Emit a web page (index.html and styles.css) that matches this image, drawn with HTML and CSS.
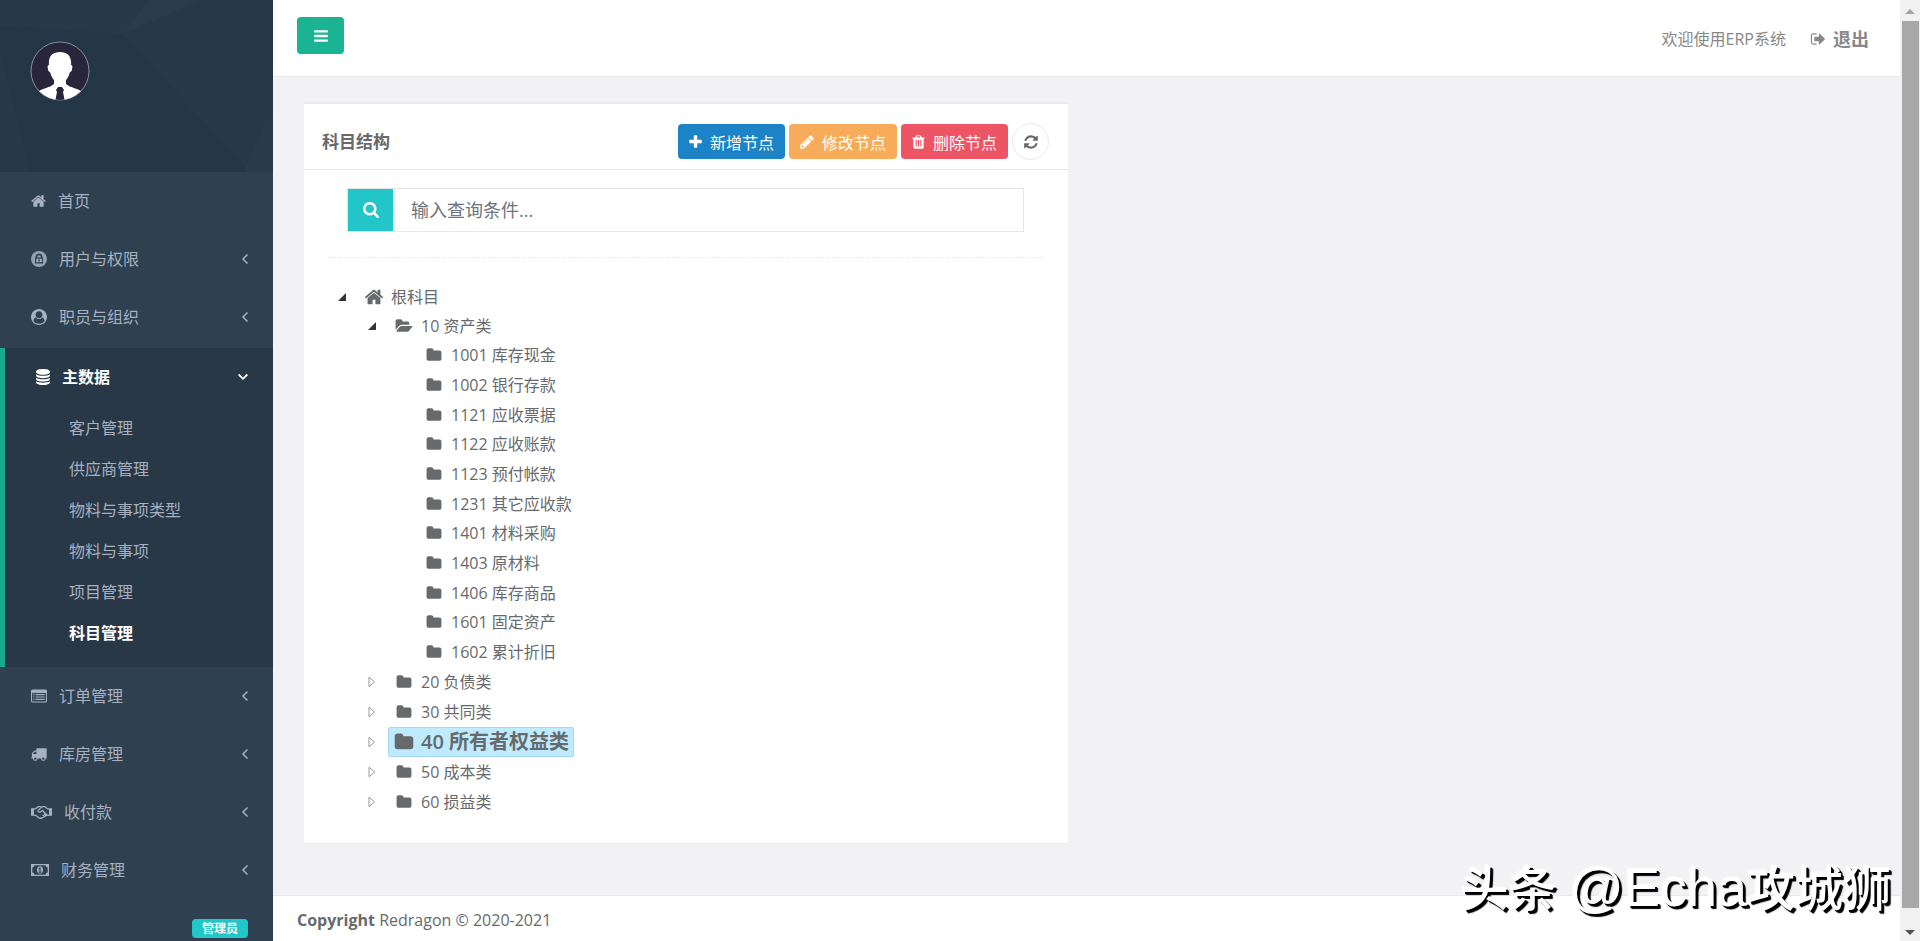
FILE: index.html
```html
<!DOCTYPE html>
<html lang="zh-CN">
<head>
    <meta charset="UTF-8">
    <meta name="viewport" content="width=device-width, initial-scale=1.0">
    <title>科目管理</title>
    <link rel="stylesheet" href="styles.css">
</head>
<body>
    <!-- 图标 -->
    <svg class="sprite" aria-hidden="true">
        <symbol id="home" viewBox="64 0 1664 1792"><path d="M1472 992v480q0 26-19 45t-45 19h-384v-384h-256v384h-384q-26 0-45-19t-19-45v-480q0-1 .5-3t.5-3l575-474 575 474q1 2 1 6zm223-69l-62 74q-8 9-21 11h-3q-13 0-21-7l-692-577-692 577q-12 8-24 7-13-2-21-11l-62-74q-8-10-7-23.500t11-21.500l719-599q32-26 76-26t76 26l244 204v-195q0-14 9-23t23-9h192q14 0 23 9t9 23v408l219 182q10 8 11 21.500t-7 23.500z"/></symbol>
        <symbol id="bars" viewBox="128 0 1536 1792"><path d="M1664 1344v128q0 26-19 45t-45 19h-1408q-26 0-45-19t-19-45v-128q0-26 19-45t45-19h1408q26 0 45 19t19 45zm0-512v128q0 26-19 45t-45 19h-1408q-26 0-45-19t-19-45v-128q0-26 19-45t45-19h1408q26 0 45 19t19 45zm0-512v128q0 26-19 45t-45 19h-1408q-26 0-45-19t-19-45v-128q0-26 19-45t45-19h1408q26 0 45 19t19 45z"/></symbol>
        <symbol id="plus" viewBox="192 0 1408 1792"><path d="M1600 736v192q0 40-28 68t-68 28h-416v416q0 40-28 68t-68 28h-192q-40 0-68-28t-28-68v-416h-416q-40 0-68-28t-28-68v-192q0-40 28-68t68-28h416v-416q0-40 28-68t68-28h192q40 0 68 28t28 68v416h416q40 0 68 28t28 68z"/></symbol>
        <symbol id="pencil" viewBox="128 0 1536 1792"><path d="M491 1536l91-91-235-235-91 91v107h128v128h107zm523-928q0-22-22-22-10 0-17 7l-542 542q-7 7-7 17 0 22 22 22 10 0 17-7l542-542q7-7 7-17zm-54-192l416 416-832 832h-416v-416zm683 96q0 53-37 90l-166 166-416-416 166-165q36-38 90-38 53 0 91 38l235 234q37 39 37 91z"/></symbol>
        <symbol id="trash" viewBox="192 0 1408 1792"><path d="M704 1376v-704q0-14-9-23t-23-9h-64q-14 0-23 9t-9 23v704q0 14 9 23t23 9h64q14 0 23-9t9-23zm256 0v-704q0-14-9-23t-23-9h-64q-14 0-23 9t-9 23v704q0 14 9 23t23 9h64q14 0 23-9t9-23zm256 0v-704q0-14-9-23t-23-9h-64q-14 0-23 9t-9 23v704q0 14 9 23t23 9h64q14 0 23-9t9-23zm-544-992h448l-48-117q-7-9-17-11h-317q-10 2-17 11zm928 32v64q0 14-9 23t-23 9h-96v948q0 83-47 143.500t-113 60.500h-832q-66 0-113-58.500t-47-141.500v-952h-96q-14 0-23-9t-9-23v-64q0-14 9-23t23-9h309l70-167q15-37 54-63t79-26h320q40 0 79 26t54 63l70 167h309q14 0 23 9t9 23z"/></symbol>
        <symbol id="refresh" viewBox="128 0 1536 1792"><path d="M1639 1056q0 5-1 7-64 268-268 434.500t-478 166.500q-146 0-282.500-55t-243.500-157l-129 129q-19 19-45 19t-45-19-19-45v-448q0-26 19-45t45-19h448q26 0 45 19t19 45-19 45l-137 137q71 66 161 102t187 36q134 0 250-65t186-179q11-17 53-117 8-23 30-23h192q13 0 22.500 9.500t9.500 22.500zm25-800v448q0 26-19 45t-45 19h-448q-26 0-45-19t-19-45 19-45l138-138q-148-137-349-137-134 0-250 65t-186 179q-11 17-53 117-8 23-30 23h-199q-13 0-22.500-9.500t-9.500-22.500v-7q65-268 270-434.500t480-166.500q146 0 284 55.500t245 156.500l130-129q19-19 45-19t45 19 19 45z"/></symbol>
        <symbol id="search" viewBox="64 128 1664 1664"><path d="M1216 832q0-185-131.500-316.500t-316.500-131.500-316.500 131.500-131.500 316.500 131.500 316.500 316.500 131.500 316.500-131.500 131.500-316.500zm512 832q0 52-38 90t-90 38q-54 0-90-38l-343-342q-179 124-399 124-143 0-273.500-55.500t-225-150-150-225-55.500-273.500 55.500-273.500 150-225 225-150 273.500-55.500 273.500 55.500 225 150 150 225 55.500 273.500q0 220-124 399l343 343q37 37 37 90z"/></symbol>
        <symbol id="folder" viewBox="64 0 1664 1792"><path d="M1728 608v704q0 92-66 158t-158 66h-1216q-92 0-158-66t-66-158v-960q0-92 66-158t158-66h320q92 0 158 66t66 158v32h672q92 0 158 66t66 158z"/></symbol>
        <symbol id="folder-open" viewBox="0 0 1880 1792"><path d="M1879 952q0 31-31 66l-336 396q-43 51-120.500 86.500t-143.500 35.500h-1088q-34 0-60.500-13t-26.500-43q0-31 31-66l336-396q43-51 120.500-86.500t143.500-35.500h1088q34 0 60.500 13t26.500 43zm-343-344v160h-832q-94 0-197 47.500t-164 119.500l-337 396-5 6q0-4-.5-12.500t-.5-12.500v-960q0-92 66-158t158-66h320q92 0 158 66t66 158v32h544q92 0 158 66t66 158z"/></symbol>
        <symbol id="database" viewBox="128 0 1536 1792"><path d="M896 768q237 0 443-43t325-127v170q0 69-103 128t-280 93.500-385 34.500-385-34.500-280-93.500-103-128v-170q119 84 325 127t443 43zm0 768q237 0 443-43t325-127v170q0 69-103 128t-280 93.500-385 34.500-385-34.500-280-93.500-103-128v-170q119 84 325 127t443 43zm0-384q237 0 443-43t325-127v170q0 69-103 128t-280 93.500-385 34.500-385-34.500-280-93.500-103-128v-170q119 84 325 127t443 43zm0-1152q208 0 385 34.500t280 93.500 103 128v128q0 69-103 128t-280 93.500-385 34.500-385-34.500-280-93.500-103-128v-128q0-69 103-128t280-93.500 385-34.500z"/></symbol>
        <symbol id="sign-out" viewBox="64 0 1600 1792"><path d="M704 1440q0 4 1 20t.5 26.500-3 23.500-10 19.500-20.500 6.500h-320q-119 0-203.500-84.500t-84.500-203.500v-704q0-119 84.500-203.500t203.500-84.500h320q13 0 22.500 9.500t9.500 22.500q0 4 1 20t.5 26.500-3 23.500-10 19.500-20.500 6.500h-320q-66 0-113 47t-47 113v704q0 66 47 113t113 47h312l11.500 1 11.500 3 8 5.500 7 9 2 13.500zm928-544q0 26-19 45l-544 544q-19 19-45 19t-45-19-19-45v-288h-448q-26 0-45-19t-19-45v-384q0-26 19-45t45-19h448v-288q0-26 19-45t45-19 45 19l544 544q19 19 19 45z"/></symbol>
        <symbol id="truck" viewBox="64 0 1728 1792"><path d="M640 1408q0-52-38-90t-90-38-90 38-38 90 38 90 90 38 90-38 38-90zm-384-512h384v-256h-158q-13 0-22 9l-195 195q-9 9-9 22v30zm1280 512q0-52-38-90t-90-38-90 38-38 90 38 90 90 38 90-38 38-90zm256-1088v1024q0 15-4 26.500t-13.500 18.500-16.500 11.500-23.500 6-22.500 2-25.500 0-22.500-.5q0 106-75 181t-181 75-181-75-75-181h-384q0 106-75 181t-181 75-181-75-75-181h-64q-3 0-22.500.5t-25.500 0-22.500-2-23.500-6-16.500-11.500-13.500-18.500-4-26.500q0-26 19-45t45-19v-320q0-8-.5-35t0-38 2.500-34.500 6.500-37 14-30.500 22.500-30l198-198q19-19 50.500-32t58.500-13h160v-192q0-26 19-45t45-19h1024q26 0 45 19t19 45z"/></symbol>
        <symbol id="lock" viewBox="0 0 16 16"><path opacity=".85" fill-rule="evenodd" d="M8 0a8 8 0 1 1 0 16A8 8 0 0 1 8 0zM4 6.600V12.500h8V6.600h-.6V6a3.400 3.400 0 0 0-6.800 0v.6zM6.200 6.600V6a1.800 1.800 0 0 1 3.600 0v.6z"/><path fill-rule="evenodd" d="M5.200 7.800h5.600v3.500H5.200zM7.300 8.300v2.500h1.400V8.300z"/></symbol>
        <symbol id="user" viewBox="0 0 1792 1792"><path d="M1523 1339q-22-155-87.500-257.500t-184.500-118.500q-67 74-159.500 115.500t-195.500 41.500-195.500-41.500-159.500-115.500q-119 16-184.500 118.500t-87.500 257.500q106 150 271 237.500t356 87.500 356-87.500 271-237.500zm-243-699q0-159-112.500-271.500t-271.500-112.500-271.500 112.500-112.500 271.500 112.500 271.500 271.500 112.500 271.500-112.500 112.500-271.500zm512 256q0 182-71 347.500t-190.500 286-285.500 191.500-349 71q-182 0-348-71t-286-191-191-286-71-348 71-348 191-286 286-191 348-71 348 71 286 191 191 286 71 348z" fill-rule="evenodd"/></symbol>
        <symbol id="list" viewBox="0 0 16 16"><path fill-rule="evenodd" d="M1.500 1.500h13A1.500 1.500 0 0 1 16 3v10a1.500 1.500 0 0 1-1.500 1.500h-13A1.500 1.500 0 0 1 0 13V3a1.500 1.500 0 0 1 1.500-1.500zM1.100 5v8c0 .3.200.5.400.5h13c.3 0 .4-.2.400-.5V5z"/><path d="M2.300 6h1.200v1.200H2.300zm2.200 0h9.200v1.200H4.500zM2.300 8.400h1.200v1.200H2.300zm2.200 0h9.200v1.200H4.500zM2.300 10.800h1.200V12H2.300zm2.200 0h9.200V12H4.500z"/></symbol>
        <symbol id="handshake" viewBox="0 0 21 16"><path d="M0 4.200h3v7.600H0zM18 4.200h3v7.600h-3z"/><path fill="none" stroke="currentColor" stroke-width="1.300" stroke-linejoin="round" d="M3 4.800h1.500L7 2.700h2.500l1 .6 1-.6H14l2.500 2.100H18M3 11.300h1.500l4 3h2l5.500-3h2M10.500 3.300L7.200 6.400c-.6 1.600 1.500 2.200 2.600 1.300l1.700-1.200 4.500 4.500M8.500 14.300l3-.6M11.500 11l2.200 1.700M13 9.700l2 2"/></symbol>
        <symbol id="money" viewBox="0 0 18 16"><path fill-rule="evenodd" d="M0 2h18v12H0zM3.500 3.300a2.300 2.300 0 0 1-2.200 2.200v5a2.300 2.300 0 0 1 2.200 2.200h11a2.300 2.300 0 0 1 2.200-2.200v-5a2.300 2.300 0 0 1-2.200-2.200z"/><path fill-rule="evenodd" d="M9 4.200c2 0 3 1.700 3 3.800s-1 3.800-3 3.800S6 10.100 6 8s1-3.800 3-3.800zM7.400 9.800v.9h3.200v-.9h-1V5.400H8.500L7.300 6.500l.6.700.5-.4v3z"/></symbol>
        <symbol id="left" viewBox="0 0 10 16"><path fill="none" stroke="currentColor" stroke-width="1.500" d="M7.500 3.500L3 8l4.500 4.500"/></symbol>
        <symbol id="down" viewBox="0 0 10 16"><path fill="none" stroke="currentColor" stroke-width="1.800" d="M.7 5.500L5 9.800l4.300-4.300"/></symbol>
        <symbol id="opened" viewBox="0 0 8 8"><path d="M8 0v8H0z"/></symbol>
        <symbol id="closed" viewBox="0 0 8 12"><path fill="none" stroke="currentColor" d="M1 1.200v9.600L6.500 6z"/></symbol>
    </svg>

    <nav class="sidebar">
        <div class="profile">
            <svg class="avatar" viewBox="0 0 60 60" role="img" aria-label="头像">
                <clipPath id="round"><circle cx="30" cy="30" r="29"/></clipPath>
                <circle cx="30" cy="30" r="29" fill="#29253b" stroke="#8a8f9c"/>
                <g clip-path="url(#round)" fill="#fff">
                    <path d="M19 24c-1-9 4-13 11-13s12 4 11 13c1 0 2 1 1 4 0 2-1 3-2 3-1 4-3 7-4 8v4c4 4 13 4 17 9v9H7v-9c4-5 13-5 17-9v-4c-1-1-3-4-4-8-1 0-2-1-2-3-1-3 0-4 1-4z"/>
                    <path d="M28 46h4l2 3-1 2 2 10H25l2-10-1-2z" fill="#29253b"/>
                </g>
            </svg>
        </div>
        <ul class="menu">
            <li><a href="#"><svg class="ico w15"><use href="#home"/></svg>首页</a></li>
            <li><a href="#"><svg class="ico w16"><use href="#lock"/></svg>用户与权限<svg class="arrow"><use href="#left"/></svg></a></li>
            <li><a href="#"><svg class="ico w16"><use href="#user"/></svg>职员与组织<svg class="arrow"><use href="#left"/></svg></a></li>
            <li class="active">
                <a href="#"><svg class="ico w14"><use href="#database"/></svg>主数据<svg class="arrow"><use href="#down"/></svg></a>
                <ul class="submenu">
                    <li><a href="#">客户管理</a></li>
                    <li><a href="#">供应商管理</a></li>
                    <li><a href="#">物料与事项类型</a></li>
                    <li><a href="#">物料与事项</a></li>
                    <li><a href="#">项目管理</a></li>
                    <li><a href="#" class="current">科目管理</a></li>
                </ul>
            </li>
            <li><a href="#"><svg class="ico w16"><use href="#list"/></svg>订单管理<svg class="arrow"><use href="#left"/></svg></a></li>
            <li><a href="#"><svg class="ico w16"><use href="#truck"/></svg>库房管理<svg class="arrow"><use href="#left"/></svg></a></li>
            <li><a href="#"><svg class="ico w21"><use href="#handshake"/></svg>收付款<svg class="arrow"><use href="#left"/></svg></a></li>
            <li><a href="#"><svg class="ico w18"><use href="#money"/></svg>财务管理<svg class="arrow"><use href="#left"/></svg></a></li>
            <li><a href="#"><span class="label">管理员</span></a></li>
        </ul>
    </nav>

    <div class="page">
        <header class="topbar">
            <button class="toggle" type="button" aria-label="菜单"><svg class="ico w16"><use href="#bars"/></svg></button>
            <div class="welcome">
                <span>欢迎使用ERP系统</span>
                <a href="#"><svg class="ico w16"><use href="#sign-out"/></svg>退出</a>
            </div>
        </header>

        <main class="content">
            <section class="ibox">
                <div class="ibox-title">
                    <h5>科目结构</h5>
                    <div class="tools">
                        <button type="button" class="btn add"><svg class="ico w13"><use href="#plus"/></svg>新增节点</button>
                        <button type="button" class="btn edit"><svg class="ico w14"><use href="#pencil"/></svg>修改节点</button>
                        <button type="button" class="btn del"><svg class="ico w13"><use href="#trash"/></svg>删除节点</button>
                        <button type="button" class="reload" aria-label="刷新"><svg class="ico w14"><use href="#refresh"/></svg></button>
                    </div>
                </div>
                <div class="ibox-content">
                    <form class="search">
                        <button type="button" aria-label="查询"><svg class="ico w16"><use href="#search"/></svg></button>
                        <input type="text" placeholder="输入查询条件..." aria-label="查询条件">
                    </form>
                    <hr>
                    <ul class="tree">
                        <li>
                            <div class="row"><svg class="opened"><use href="#opened"/></svg><a href="#"><svg class="big"><use href="#home"/></svg>根科目</a></div>
                            <ul>
                                <li>
                                    <div class="row"><svg class="opened"><use href="#opened"/></svg><a href="#"><svg><use href="#folder-open"/></svg>10 资产类</a></div>
                                    <ul class="leaf">
                                        <li class="row"><a href="#"><svg><use href="#folder"/></svg>1001 库存现金</a></li>
                                        <li class="row"><a href="#"><svg><use href="#folder"/></svg>1002 银行存款</a></li>
                                        <li class="row"><a href="#"><svg><use href="#folder"/></svg>1121 应收票据</a></li>
                                        <li class="row"><a href="#"><svg><use href="#folder"/></svg>1122 应收账款</a></li>
                                        <li class="row"><a href="#"><svg><use href="#folder"/></svg>1123 预付帐款</a></li>
                                        <li class="row"><a href="#"><svg><use href="#folder"/></svg>1231 其它应收款</a></li>
                                        <li class="row"><a href="#"><svg><use href="#folder"/></svg>1401 材料采购</a></li>
                                        <li class="row"><a href="#"><svg><use href="#folder"/></svg>1403 原材料</a></li>
                                        <li class="row"><a href="#"><svg><use href="#folder"/></svg>1406 库存商品</a></li>
                                        <li class="row"><a href="#"><svg><use href="#folder"/></svg>1601 固定资产</a></li>
                                        <li class="row"><a href="#"><svg><use href="#folder"/></svg>1602 累计折旧</a></li>
                                    </ul>
                                </li>
                                <li class="row"><svg class="closed"><use href="#closed"/></svg><a href="#"><svg><use href="#folder"/></svg>20 负债类</a></li>
                                <li class="row"><svg class="closed"><use href="#closed"/></svg><a href="#"><svg><use href="#folder"/></svg>30 共同类</a></li>
                                <li class="row"><svg class="closed"><use href="#closed"/></svg><a href="#" class="selected"><svg class="big"><use href="#folder"/></svg>40 所有者权益类</a></li>
                                <li class="row"><svg class="closed"><use href="#closed"/></svg><a href="#"><svg><use href="#folder"/></svg>50 成本类</a></li>
                                <li class="row"><svg class="closed"><use href="#closed"/></svg><a href="#"><svg><use href="#folder"/></svg>60 损益类</a></li>
                            </ul>
                        </li>
                    </ul>
                </div>
            </section>
        </main>

        <footer class="footer"><strong>Copyright</strong> Redragon © 2020-2021</footer>
    </div>

    <div class="scrollbar" aria-hidden="true">
        <i class="up"></i>
        <i class="thumb"></i>
        <i class="down"></i>
    </div>

    <div class="watermark">头条 <span>@Echa</span>攻城狮</div>
</body>
</html>
```
FILE: styles.css
```css
*{
    box-sizing: border-box;
}
body{
    margin: 0;
    display: flex;
    height: 100vh;
    overflow: hidden;
    font-family: "Open Sans", "Noto Sans CJK SC", sans-serif;
    font-size: 16px;
    line-height: 24px;
    color: #676a6c;
    background: #f2f2f4;
}
ul{
    margin: 0;
    padding: 0;
    list-style: none;
}
a{
    color: inherit;
    text-decoration: none;
}
button, input{
    font-family: inherit;
    font-size: 16px;
    color: inherit;
}
button{
    padding: 0;
    border: 0;
    cursor: pointer;
}
svg{
    fill: currentColor;
    flex: none;
}
.sprite{
    position: absolute;
    width: 0;
    height: 0;
}
.ico{
    height: 16px;
}
.w13{ width: 13px; }
.w14{ width: 14px; }
.w15{ width: 15px; }
.w16{ width: 16px; }
.w18{ width: 18px; }
.w21{ width: 21px; }

/* 侧边栏 */
.sidebar{
    width: 273px;
    flex: none;
    overflow: hidden;
    color: #a7b1c2;
    background: #2f4050;
}
.profile{
    height: 172px;
    padding: 41px 30px;
    background: #243747 url("data:image/svg+xml,%3Csvg xmlns='http://www.w3.org/2000/svg' width='273' height='173'%3E%3Cpath fill='%23283a49' d='M0 0h148l-25 34L0 25z'/%3E%3Cpath fill='%232a3c4b' d='M148 0h55l-80 34z'/%3E%3Cpath fill='%23273949' d='M203 0h70v105l-28 62L123 34z'/%3E%3Cpath fill='%23293b4a' d='M273 105v68h-28v-6z'/%3E%3Cpath fill='%23263949' d='M0 50l30 123H0z'/%3E%3C/svg%3E") no-repeat;
}
.avatar{
    display: block;
    width: 60px;
    height: 60px;
}
.menu > li > a{
    display: flex;
    align-items: center;
    height: 58px;
    padding: 0 23px 0 31px;
}
.menu .ico{
    margin-right: 12px;
}
.arrow{
    width: 10px;
    height: 16px;
    margin-left: auto;
}
.menu > .active{
    margin-top: 2px;
    padding-bottom: 13px;
    border-left: 5px solid #19aa8d;
    background: #293846;
}
.menu > .active > a{
    padding-right: 25px;
    color: #fff;
    font-weight: 600;
}
.submenu{
    padding-top: 2px;
}
.submenu a{
    display: block;
    padding-left: 64px;
    line-height: 41px;
}
.submenu .current{
    color: #fff;
    font-weight: 600;
}
.label{
    margin: 0 2px 0 auto;
    padding: 0 10px;
    border-radius: 4px;
    font-size: 12px;
    font-weight: 600;
    line-height: 19px;
    color: #fff;
    background: #23c6c8;
}

/* 右侧页面 */
.page{
    flex: 1;
    min-width: 0;
    display: flex;
    flex-direction: column;
}
.topbar{
    display: flex;
    justify-content: space-between;
    height: 77px;
    padding: 17px 31px 0 24px;
    border-bottom: 1px solid #e7eaec;
    background: #fff;
}
.toggle{
    display: flex;
    align-items: center;
    justify-content: center;
    width: 47px;
    height: 37px;
    border-radius: 4px;
    color: #fff;
    background: #1ab394;
}
.welcome{
    display: flex;
    align-items: center;
    height: 43px;
    gap: 24px;
    color: #888;
}
.welcome a{
    display: flex;
    align-items: center;
    gap: 7px;
    font-size: 18px;
    font-weight: 600;
    color: #888;
}
.content{
    flex: 1;
    display: grid;
    grid-template-columns: 1fr 1fr;
    align-items: start;
    gap: 37px;
    padding: 25px 31px 0;
}
.ibox{
    border-top: 2px solid #e7eaec;
    border-bottom: 1px solid #e7eaec;
    background: #fff;
}
.ibox-title{
    display: flex;
    align-items: center;
    justify-content: space-between;
    height: 66px;
    padding: 10px 19px 0 18px;
    border-bottom: 1px solid #e7eaec;
}
.ibox-title h5{
    margin: 0;
    font-size: 17px;
    font-weight: 600;
}
.tools{
    display: flex;
    align-items: center;
    gap: 4px;
}
.btn{
    display: flex;
    align-items: center;
    gap: 8px;
    height: 35px;
    padding: 0 11px;
    border-radius: 4px;
    color: #fff;
}
.add{ background: #1c84c6; }
.edit{ background: #f8ac59; }
.del{ background: #ed5565; }
.reload{
    display: flex;
    align-items: center;
    justify-content: center;
    width: 37px;
    height: 37px;
    border: 1px solid #e7eaec;
    border-radius: 50%;
    background: #fff;
}
.ibox-content{
    padding: 18px 24px 26px;
}
.search{
    display: flex;
    margin: 0 20px 0 19px;
}
.search button{
    display: flex;
    align-items: center;
    justify-content: center;
    width: 47px;
    height: 44px;
    border: 1px solid #e5e6e7;
    color: #fff;
    background: #23c6c8;
}
.search input{
    flex: 1;
    min-width: 0;
    height: 44px;
    padding: 0 16px;
    border: 1px solid #e5e6e7;
    font-size: 18px;
    background: #fff;
}
.search input::placeholder{
    color: #6c757d;
}
hr{
    margin: 25px 0 24px;
    border: 0;
    border-top: 1px dashed #e7eaec;
}

/* 科目树 */
.tree ul{
    margin-left: 30px;
}
.row{
    display: flex;
    align-items: center;
    height: 30px;
}
div.row{
    height: 29px;
}
.leaf .row{
    padding-left: 30px;
}
.leaf .row:nth-child(3n){
    height: 29px;
}
.row a{
    display: flex;
    align-items: center;
    height: 30px;
    padding: 0 4px 0 3px;
    border: 1px solid transparent;
    border-radius: 2px;
}
.row a svg{
    width: 24px;
    height: 16px;
    margin-right: 5px;
}
.row a .big{
    height: 20px;
}
.row .opened{
    width: 8px;
    height: 8px;
    margin: 0 12px 0 10px;
    color: #333;
}
.row .closed{
    width: 8px;
    height: 12px;
    margin: 0 12px 0 10px;
    color: #999;
}
.row .selected{
    border-color: #a5d8ec;
    font-size: 20px;
    font-weight: 600;
    background: #beebff;
}
.footer{
    height: 46px;
    padding: 12px 24px;
    border-top: 1px solid #e7eaec;
    background: #fff;
}

/* 滚动条 */
.scrollbar{
    display: flex;
    flex-direction: column;
    align-items: center;
    width: 20px;
    background: #f1f1f1;
}
.scrollbar .up{
    margin: 9px 0 7px;
    border: 5px solid transparent;
    border-top: 0;
    border-bottom-color: #a3a3a3;
}
.scrollbar .thumb{
    flex: 1;
    width: 17px;
    background: #a8a8a8;
}
.scrollbar .down{
    margin: 22px 0 6px;
    border: 5px solid transparent;
    border-bottom: 0;
    border-top-color: #505050;
}
.watermark{
    position: fixed;
    right: 29px;
    bottom: 21px;
    font-size: 48px;
    font-weight: 500;
    line-height: 64px;
    color: #fff;
    text-shadow: 2px 2px 0 #000, 3px 3px 1px #000, -1px -1px 2px #fff;
    white-space: nowrap;
}
.watermark span{
    font-family: "Liberation Sans", sans-serif;
    font-size: 54px;
}
```
